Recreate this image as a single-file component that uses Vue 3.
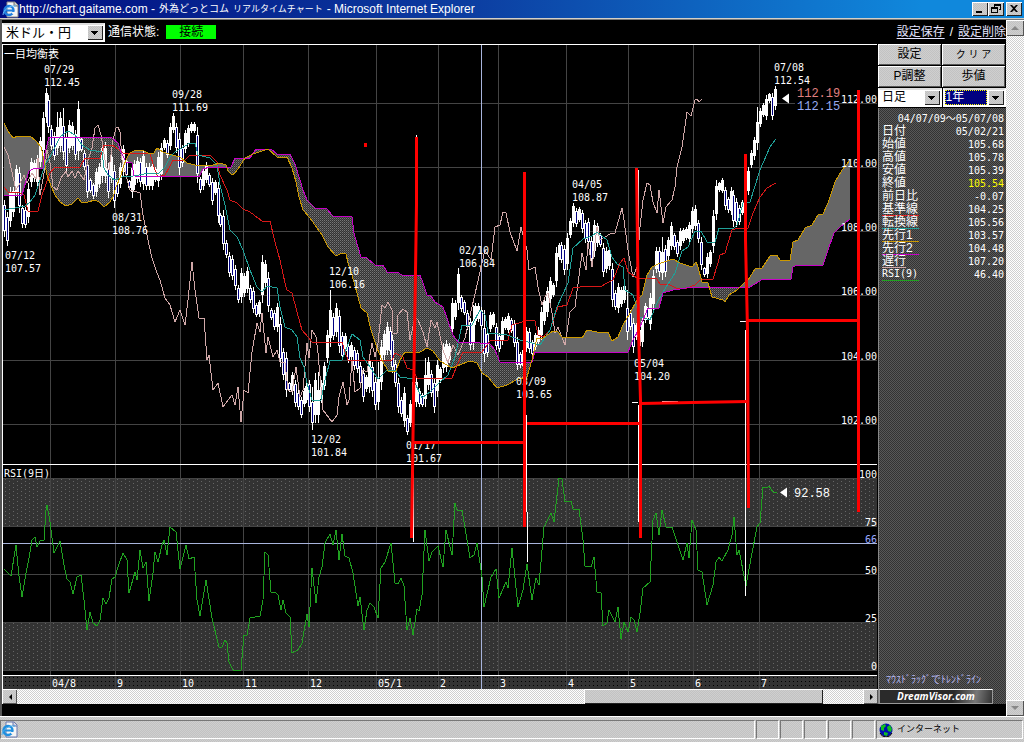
<script setup>
import { ref } from 'vue'

const pair = ref('usdjpy')
const span = ref('day')
const range = ref('1y')

const parse = (s) => s.trim().split(/\s+/).map((p) => p.split(',').map(Number))

const spanA = '4,123 8,131 13,138 18,136 30,136 36,141 41,147 44,160 47,175 51,186 55,195 60,202 66,206 72,204 78,198 82,203 88,202 95,200 99,202 104,207 110,202 113,197 116,187 120,178 124,165 127,158 130,153 136,150 142,150 148,153 154,153 157,148 163,152 172,155 180,157 187,163 195,165 213,165 220,163 226,165 228,171 232,175 235,173 240,166 245,158 253,154 268,149 277,157 287,157 292,168 296,182 299,197 303,210 310,218 322,235 328,247 336,256 342,253 346,254 348,263 352,275 357,293 361,308 367,313 371,330 377,348 382,360 388,371 396,371 400,360 405,352 420,352 427,348 433,351 440,361 452,368 467,362 471,361 477,363 482,373 488,377 497,388 507,385 518,379 527,377 532,360 537,338 543,338 553,331 558,332 562,337 582,338 587,330 597,332 608,332 612,341 618,337 623,325 630,313 637,300 642,295 647,275 652,267 658,264 673,259 680,263 692,267 696,262 698,267 702,282 708,283 712,297 723,300 725,302 729,295 737,290 745,282 748,280 755,269 762,268 770,256 777,255 780,260 790,260 793,242 798,240 805,228 812,225 818,215 823,214 828,203 835,182 842,170 850,160'
const spanB = '4,195 22,195 24,188 29,171 35,168 43,168 45,153 49,137 111,137 118,143 121,152 126,162 132,163 134,176 199,177 203,169 210,167 231,167 235,158 250,158 256,149 271,149 277,154 290,154 295,164 300,180 303,190 307,200 315,208 326,208 333,216 347,216 352,217 354,233 358,247 361,257 367,258 375,265 383,265 387,272 397,272 402,275 420,275 423,283 427,295 431,296 435,302 443,307 447,318 453,335 458,342 480,343 490,344 495,350 500,362 532,362 535,352 628,352 633,340 640,327 648,308 659,308 663,293 673,290 693,287 738,287 750,287 763,279 791,279 793,267 797,265 823,265 828,250 834,233 840,227 850,219'
const tenkan = '4,210 15,208 25,206 30,202 35,195 40,180 45,165 52,153 60,137 68,131 75,135 82,145 90,150 102,152 104,168 108,175 115,180 122,177 133,176 150,173 158,174 165,167 170,157 175,152 190,143 195,143 198,155 210,158 217,165 220,185 225,205 230,230 237,237 243,250 250,270 257,287 262,292 267,286 277,288 280,307 285,327 292,330 297,337 300,358 304,367 307,383 312,400 321,400 325,380 330,361 342,360 347,347 352,334 360,340 363,357 370,367 378,379 387,370 395,370 400,377 413,379 422,398 430,392 440,382 448,375 455,357 462,325 472,325 480,310 485,315 488,333 507,335 520,340 540,345 550,330 557,307 568,283 573,248 583,239 592,236 597,232 607,240 612,257 617,264 623,267 625,290 633,295 640,317 650,320 657,303 663,292 675,273 682,251 688,247 695,231 701,231 707,242 715,242 719,228 734,228 737,225 743,203 750,202 760,170 770,147 776,139'
const kijun = '4,187 8,192 18,192 24,195 28,211 38,211 42,195 50,173 55,167 80,167 85,158 100,158 104,145 112,145 118,149 123,153 150,154 155,170 158,177 165,175 170,166 173,160 185,160 190,155 210,155 217,162 220,175 227,190 230,200 237,203 243,209 250,212 258,218 262,221 270,221 275,242 280,260 285,283 287,290 292,293 297,312 302,330 308,337 312,342 342,342 345,352 348,360 392,360 395,353 403,357 407,368 413,370 417,378 452,378 458,363 463,352 482,352 490,341 508,340 512,325 522,322 525,320 535,321 538,335 543,337 550,330 555,315 558,307 567,305 573,288 580,287 602,286 607,283 613,280 620,263 624,258 628,272 637,278 657,279 660,284 670,285 676,288 687,288 695,285 700,280 713,279 718,263 720,255 725,253 732,230 738,228 748,228 753,213 760,197 767,188 776,183'
const chikou = '4,147 8,155 12,172 16,190 20,183 24,175 27,183 32,173 36,179 38,158 40,195 45,168 47,150 50,163 53,187 57,190 61,178 66,171 68,177 72,171 75,178 78,171 84,180 88,160 92,148 95,128 98,125 101,135 103,147 106,167 109,170 113,140 116,128 118,127 120,132 122,160 126,175 130,190 140,193 143,215 148,240 152,258 157,273 160,280 165,298 170,305 175,322 180,310 185,325 188,300 192,262 195,290 199,318 204,318 207,360 209,355 213,390 218,383 223,407 232,395 235,405 238,387 241,422 244,390 248,393 252,352 257,323 260,332 262,313 266,353 268,337 273,357 277,350 280,362 285,363 288,390 292,392 296,367 300,397 303,390 307,343 309,358 312,330 316,337 318,353 323,410 332,422 337,415 339,397 343,382 347,405 349,400 352,360 355,392 360,388 363,370 367,372 372,343 375,357 378,343 382,305 385,308 388,302 392,310 393,333 397,333 398,315 403,309 407,312 410,340 415,317 418,320 423,332 427,347 431,320 435,328 437,322 443,350 448,363 453,345 458,355 465,338 472,307 480,272 485,250 491,260 495,227 500,225 503,212 506,213 510,232 517,251 521,227 527,250 529,270 535,267 538,287 542,305 545,297 548,293 552,313 555,333 558,327 565,345 570,312 575,307 582,253 586,270 588,243 592,267 597,227 600,240 610,234 615,233 622,208 624,220 628,250 633,277 637,267 640,227 643,200 647,183 650,185 653,202 657,213 659,190 663,223 666,207 672,200 675,187 677,167 682,147 687,112 691,116 695,100 697,99 699,102 702,99'
const rsi = '4,569 11,576 16,545 19,576 22,597 26,573 29,558 32,540 35,537 37,547 40,541 44,540 46,510 47,505 50,522 54,553 60,541 64,565 67,579 70,582 73,594 77,577 81,575 84,600 87,630 90,612 93,623 97,626 100,620 103,598 106,604 109,598 112,579 115,577 118,567 123,553 127,560 129,593 135,572 137,580 140,550 143,568 146,562 149,601 153,573 155,552 158,562 162,545 164,540 167,555 170,527 176,532 180,569 186,545 189,559 194,557 197,600 200,616 206,580 212,618 219,647 222,647 225,640 227,643 229,662 233,670 241,670 244,635 247,635 250,618 260,616 263,600 265,552 268,555 271,592 275,592 278,595 281,610 283,600 286,613 290,617 292,653 298,650 302,643 307,614 309,627 312,568 316,603 319,577 322,567 325,543 330,534 333,545 336,530 339,560 342,534 345,556 349,558 353,573 358,606 360,597 364,630 367,610 370,603 374,607 378,618 381,568 385,562 391,543 395,583 398,584 401,578 404,586 407,630 410,618 413,635 417,609 419,611 422,595 425,530 429,561 432,552 438,546 443,567 446,530 452,555 455,503 457,510 462,510 470,558 474,555 477,543 482,577 484,607 491,577 496,569 499,598 506,582 508,588 512,548 518,607 523,590 527,564 532,600 536,578 539,585 544,527 551,513 554,522 559,478 562,479 565,502 571,501 573,509 579,509 583,540 585,566 591,567 594,557 597,592 601,593 603,626 607,623 609,610 615,622 618,607 621,639 624,622 628,632 631,617 634,620 637,632 640,613 643,588 650,582 653,520 656,513 659,535 662,510 666,527 672,527 677,542 683,560 687,543 689,558 692,520 696,530 698,570 702,572 707,605 713,585 716,562 719,557 722,561 728,550 732,535 734,517 737,555 739,550 746,586 752,553 757,527 760,523 763,487 767,488 769,486 773,492 777,493'

const bars = parse('200,237 212,246 187,227 187,217 165,197 167,213 205,228 207,228 183,223 158,187 160,182 155,187 137,167 112,157 88,123 95,133 125,150 132,160 112,155 112,152 108,160 132,173 120,153 122,150 130,160 101,160 137,152 150,170 160,198 178,193 183,199 168,197 163,188 142,183 142,183 163,198 153,183 165,208 180,197 163,188 145,177 158,178 180,190 163,198 160,190 157,183 158,187 150,190 163,190 163,190 162,190 167,182 152,187 143,180 138,150 140,158 123,150 113,133 123,153 133,175 145,167 130,153 125,147 122,133 122,133 127,183 177,193 168,190 162,183 173,187 178,205 180,195 182,223 213,227 210,250 240,258 252,277 255,280 265,290 285,303 268,303 273,297 267,293 285,303 287,313 303,317 300,317 255,303 260,287 272,312 308,320 310,330 303,332 317,367 348,380 352,397 382,392 372,395 380,407 390,410 397,418 388,407 383,403 380,412 387,430 373,423 372,423 380,403 362,390 330,363 290,347 313,340 303,337 310,353 332,360 333,355 343,363 342,360 347,370 350,373 362,387 368,402 375,392 355,393 362,397 377,410 362,410 340,390 330,360 322,355 327,355 335,373 360,387 378,413 397,417 387,427 415,435 400,427 378,410 378,407 388,407 393,407 358,407 357,390 370,397 378,413 360,397 367,383 343,373 340,372 343,363 298,335 300,320 268,310 295,312 300,315 310,330 318,350 305,350 303,325 303,322 307,330 310,362 330,357 312,332 312,327 323,350 333,352 317,345 317,330 313,333 318,333 320,347 337,370 352,368 347,370 327,352 328,353 340,357 333,350 327,345 307,340 297,325 287,317 277,303 283,297 247,287 243,260 242,263 245,275 233,270 218,238 203,227 208,227 207,222 210,233 220,243 218,247 237,263 220,257 223,247 233,247 243,277 247,273 247,270 263,307 290,310 283,313 287,307 283,303 290,340 310,330 318,353 323,340 327,350 317,347 303,323 307,320 293,330 270,310 247,273 247,277 237,280 245,277 237,260 222,250 233,250 240,257 228,250 228,243 227,240 222,242 207,233 205,230 220,243 237,270 267,277 253,278 250,267 210,253 180,220 182,192 178,193 187,210 197,213 187,215 190,227 198,227 205,225 200,215 190,197 167,195 150,168 137,160 107,150 108,127 103,117 95,120 93,103 93,120 86,110')

const firstX = 4
const lastX = 775
const candles = bars.map(([high, low], i) => {
  const mid = (high + low) / 2
  const prev = i ? (bars[i - 1][0] + bars[i - 1][1]) / 2 : mid - 1
  const length = low - high
  const upper = length > 42 && i % 2 === 0 ? 0.35 : 0.14
  return {
    x: Math.round(firstX + ((lastX - firstX) * i) / (bars.length - 1)),
    high,
    low,
    top: Math.round(high + length * upper),
    bottom: Math.round(low - length * 0.16),
    down: mid > prev,
  }
})

function valueAt(points, x) {
  for (let i = 1; i < points.length; i++) {
    if (points[i][0] >= x) {
      const [x0, y0] = points[i - 1]
      const [x1, y1] = points[i]
      return y0 + ((y1 - y0) * (x - x0)) / (x1 - x0)
    }
  }
  return points[points.length - 1][1]
}

// The cloud is filled column by column: plain when span A leads, dotted when span B leads.
const cloud = { bull: '', bear: '' }
const a = parse(spanA)
const b = parse(spanB)
for (let x = 4; x < 850; x++) {
  const ya = Math.round(valueAt(a, x))
  const yb = Math.round(valueAt(b, x))
  if (ya < yb) cloud.bull += `M${x} ${ya}h1V${yb}h-1z`
  if (ya > yb) cloud.bear += `M${x} ${yb}h1V${ya}h-1z`
}

const months = [
  [50, '04/8'], [115, '9'], [180, '10'], [243, '11'], [308, '12'], [376, '05/1'],
  [438, '2'], [498, '3'], [566, '4'], [628, '5'], [693, '6'], [759, '7'],
]
const prices = [[103, '112.00'], [167, '110.00'], [231, '108.00'], [295, '106.00'], [360, '104.00'], [424, '102.00']]
const levels = [[478, '100'], [526, '75'], [574, '50'], [622, '25'], [670, '0']]
const marks = [
  [44, 73, '07/29', '112.45'], [172, 98, '09/28', '111.69'], [112, 221, '08/31', '108.76'],
  [5, 259, '07/12', '107.57'], [329, 275, '12/10', '106.16'], [459, 254, '02/10', '106.84'],
  [311, 443, '12/02', '101.84'], [406, 449, '01/17', '101.67'], [516, 385, '03/09', '103.65'],
  [572, 188, '04/05', '108.87'], [634, 367, '05/04', '104.20'], [774, 71, '07/08', '112.54'],
]
const rows = [
  ['日付', '05/02/21'], ['始値', '105.68'], ['高値', '105.78'], ['安値', '105.39'],
  ['終値', '105.54', '', 'close'], ['前日比', '-0.07'], ['基準線', '104.25', 'key u-red'],
  ['転換線', '105.56', 'key u-teal'], ['先行1', '103.57', 'key u-gold'], ['先行2', '104.48', 'key u-magenta'],
  ['遅行', '107.20', 'key u-pink'], ['RSI(9)', '46.40', 'key u-green'],
]
</script>

<template>
  <div class="window">
    <header class="titlebar">
      <svg class="ie" viewBox="0 0 17 17" aria-hidden="true">
        <path d="M5 1h8l3 3v12H5z" fill="#f4f4f4" stroke="#888" />
        <path d="M12 1v4h4" fill="#bbb" stroke="#777" />
        <ellipse cx="7" cy="9.500" rx="4.500" ry="4.500" fill="none" stroke="#1f7fe0" stroke-width="2.400" />
        <path d="M3 9.500h8" stroke="#1f7fe0" stroke-width="2" />
        <path d="M9.500 11h4v2h-3z" fill="#f4f4f4" />
        <path d="M1 14C1 9 8 4 14 5" fill="none" stroke="#6cc4ff" />
      </svg>
      <h1>
        <span>http://chart.gaitame.com -</span>
        <span class="kana">外為どっとコム</span>
        <span class="kana second">リアルタイムチャート</span>
        <span>- Microsoft Internet Explorer</span>
      </h1>
      <div class="winbtns">
        <button aria-label="最小化"><svg viewBox="0 0 14 12"><path d="M3 8h6v2H3z" /></svg></button>
        <button aria-label="元に戻す"><svg viewBox="0 0 14 12"><path d="M5 1h7v6H10V6h1V3H6v1H5zM2 4h7v6H2zM3 6v3h5V6z" fill-rule="evenodd" /></svg></button>
        <button class="close-btn" aria-label="閉じる"><svg viewBox="0 0 14 12"><path d="M3 2h2l2 2 2-2h2L8 5.500 11 9H9L7 7 5 9H3l3-3.500z" /></svg></button>
      </div>
    </header>

    <div class="viewport">
      <main>
        <div class="toolbar">
          <label class="select pair">
            <select v-model="pair" aria-label="通貨ペア"><option value="usdjpy">米ドル・円</option></select>
          </label>
          <span class="state">通信状態:</span>
          <span class="connected">接続</span>
          <nav>
            <a href="#save">設定保存</a><span>/</span><a href="#delete">設定削除</a>
          </nav>
        </div>

        <div class="content">
          <section class="chart-col">
            <svg class="chart" viewBox="2 44 876 645" role="img" aria-label="米ドル・円 一目均衡表">
              <defs>
                <pattern id="dots" width="2" height="2" patternUnits="userSpaceOnUse">
                  <rect width="2" height="2" fill="#333" /><rect width="1" height="1" fill="#777" /><rect x="1" y="1" width="1" height="1" fill="#555" />
                </pattern>
                <pattern id="band" width="8" height="8" patternUnits="userSpaceOnUse">
                  <rect width="8" height="8" fill="#333" />
                  <path d="M1 1h1v1H1zM5 3h1v1H5zM1 5h1v1H1zM5 7h1v1H5z" fill="#666" />
                </pattern>
                <pattern id="axis" width="4" height="4" patternUnits="userSpaceOnUse">
                  <rect width="4" height="4" fill="#333" /><rect x="1" y="1" width="1" height="1" fill="#000" />
                </pattern>
              </defs>
              <g shape-rendering="crispEdges">
                <rect x="2" y="44" width="876" height="645" fill="#000" />
                <rect x="3" y="478" width="874" height="49" fill="url(#band)" />
                <rect x="3" y="622" width="874" height="49" fill="url(#band)" />
                <rect x="3" y="676" width="874" height="13" fill="url(#axis)" />
                <g class="grid">
                  <rect v-for="m in months" :key="m[0]" :x="m[0]" y="45" width="1" height="644" />
                  <rect v-for="p in prices" :key="p[0]" x="3" :y="p[0]" width="874" height="1" />
                  <rect v-for="l in levels" :key="l[0]" x="3" :y="l[0]" width="874" height="1" />
                </g>
                <path :d="cloud.bull" fill="#666" />
                <path :d="cloud.bear" fill="url(#dots)" />
                <rect x="481" y="45" width="1" height="644" class="cursor" />
                <rect x="3" y="543" width="874" height="1" class="cursor" />
                <g v-for="(c, i) in candles" :key="i">
                  <rect :x="c.x" :y="c.high" width="1" :height="c.low - c.high" fill="#fff" />
                  <rect :x="c.x - 1" :y="c.top" width="3" :height="c.bottom - c.top" fill="#fff" />
                  <rect v-if="c.down" :x="c.x" :y="c.top + 1" width="1" :height="Math.max(1, c.bottom - c.top - 2)" fill="#000080" />
                </g>
              </g>
              <g class="lines" shape-rendering="crispEdges">
                <polyline :points="chikou" stroke="#d0a8a8" />
                <polyline :points="kijun" stroke="#d81818" />
                <polyline :points="tenkan" stroke="#20a098" />
                <polyline :points="spanB" stroke="#c800c8" />
                <polyline :points="spanA" stroke="#cc9900" />
                <polyline :points="rsi" stroke="#20a020" />
              </g>
              <g shape-rendering="crispEdges" fill="#fff">
                <rect x="3" y="44" width="874" height="1" />
                <rect x="3" y="464" width="874" height="1" />
                <rect x="3" y="675" width="874" height="1" />
                <rect x="2" y="44" width="1" height="645" />
              </g>
              <g class="jp">
                <text x="4" y="58">一目均衡表</text>
              </g>
              <g class="num">
                <text x="4" y="477">RSI(9日)</text>
                <g v-for="m in marks" :key="m[2]">
                  <text :x="m[0]" :y="m[1]">{{ m[2] }}</text>
                  <text :x="m[0]" :y="m[1] + 13">{{ m[3] }}</text>
                </g>
                <text v-for="m in months" :key="m[1]" :x="m[0] + 2" y="687">{{ m[1] }}</text>
                <g text-anchor="end">
                  <text v-for="p in prices" :key="p[1]" x="877" :y="p[0]">{{ p[1] }}</text>
                  <text v-for="l in levels" :key="l[1]" x="877" :y="l[0]">{{ l[1] }}</text>
                  <text x="877" y="543" fill="#99aaff">66</text>
                </g>
              </g>
              <path d="M782 98.500l7-5v10zM780 492.500l7-5v10z" fill="#fff" />
              <rect x="795" y="91" width="44" height="20" fill="#000" />
              <g class="quote">
                <text x="797" y="97" fill="#e08080">112.19</text>
                <text x="797" y="110" fill="#99aaee">112.15</text>
                <text x="794" y="497" fill="#fff">92.58</text>
              </g>
              <g class="white" shape-rendering="crispEdges">
                <path d="M413.500 415V542M526.500 415V512M527.500 512V562M638.500 170V242M638.500 405V522M745.500 330V596M632 402.500h6M662 401.500h16M740 321.500h6M416.500 135v3" />
              </g>
              <g class="red">
                <path d="M416.500 137V205L415.500 272 413.500 400 412.500 472 411.500 538" />
                <path d="M524.500 172V527" />
                <path d="M636.500 168L637.500 242 638.500 330 640.500 400V538" />
                <path d="M745.500 154V240L747.500 330 748.500 508" />
                <path d="M858.500 90V512" />
                <path d="M413 442.500H525M527 423.500H639M641 403.500L692 402.500 748 401.500M746 320.500H858" />
                <path d="M365.500 143v4" />
              </g>
            </svg>
            <div class="hscroll">
              <button aria-label="左へ"><svg viewBox="0 0 8 8"><path d="M6 1v6L3 4z" /></svg></button>
              <div class="before"></div><div class="thumb"></div><div class="after"></div>
              <button aria-label="右へ"><svg viewBox="0 0 8 8"><path d="M3 1v6l3-3z" /></svg></button>
            </div>
          </section>

          <aside>
            <div class="buttons">
              <button>設定</button><button class="wide">ク リ ア</button>
              <button>P調整</button><button>歩値</button>
            </div>
            <div class="selects">
              <label class="select"><select v-model="span" aria-label="足種"><option value="day">日足</option></select></label>
              <label class="select focus"><select v-model="range" aria-label="期間"><option value="1y">1年</option></select></label>
            </div>
            <div class="info">
              <p class="period">04/07/09～05/07/08</p>
              <table>
                <tbody>
                  <tr v-for="r in rows" :key="r[0]">
                    <th scope="row"><span :class="r[2]">{{ r[0] }}</span></th>
                    <td :class="r[3]">{{ r[1] }}</td>
                  </tr>
                </tbody>
              </table>
              <p class="hint">ﾏｳｽﾄﾞﾗｯｸﾞでﾄﾚﾝﾄﾞﾗｲﾝ</p>
              <div class="brand">DreamVisor.com</div>
            </div>
          </aside>
        </div>
      </main>

      <div class="vscroll">
        <button aria-label="上へ" disabled><svg viewBox="0 0 8 8"><path d="M0 6l4-4 4 4z" /></svg></button>
        <button aria-label="下へ" disabled><svg viewBox="0 0 8 8"><path d="M0 2l4 4 4-4z" /></svg></button>
      </div>
    </div>

    <footer class="status">
      <div class="page">
        <svg class="ie" viewBox="0 0 17 17" aria-hidden="true">
          <path d="M5 1h8l3 3v12H5z" fill="#f4f4f4" stroke="#6878b0" />
          <path d="M12 1v4h4" fill="#ccd" stroke="#6878b0" />
          <ellipse cx="7" cy="9.500" rx="4.500" ry="4.500" fill="none" stroke="#1f8fe0" stroke-width="2.400" />
          <path d="M3 9.500h8" stroke="#1f8fe0" stroke-width="2" />
          <path d="M9.500 11h4v2h-3z" fill="#f4f4f4" />
          <path d="M1 14C1 9 8 4 14 5" fill="none" stroke="#48b0f0" />
        </svg>
      </div>
      <div v-for="n in 5" :key="n" class="cell"></div>
      <div class="zone">
        <svg viewBox="0 0 14 14" aria-hidden="true">
          <circle cx="7" cy="7" r="6.500" fill="#0010b0" />
          <path d="M2 3l4-2 1 2-2 2v3L2 7zM8 4l3-2 2 4-1 3-3-1zM5 9l4 1-1 3-3-1z" fill="#10c020" />
          <path d="M1 10a6.500 6.500 0 0 0 12 0" fill="none" stroke="#000" />
        </svg>
        インターネット
      </div>
    </footer>
  </div>
</template>

<style>
body {
  margin: 0;
  background: #000;
}
</style>

<style scoped>
.window {
  --face: repeating-conic-gradient(#cfcfcf 0 25%, #c2c2c2 0 50%) 0 0 / 2px 2px;
  --track: repeating-conic-gradient(#fff 0 25%, #d0d0d0 0 50%) 0 0 / 2px 2px;
  --jp: "Liberation Sans", "Noto Sans CJK JP", sans-serif;
  --mono: "DejaVu Sans Mono", "Noto Sans CJK JP", monospace;
  display: flex;
  flex-direction: column;
  min-height: 100vh;
  font: 12px/13px var(--jp);
  color: #fff;
  background: #000;
}
button,
select {
  font: inherit;
  color: #000;
  margin: 0;
  padding: 0;
  border: 0;
  border-radius: 0;
  box-sizing: border-box;
}
p {
  margin: 0;
}
button {
  background: var(--face);
  box-shadow: inset 1px 1px #fff, inset -1px -1px #555;
}
.titlebar {
  display: flex;
  align-items: center;
  height: 18px;
  padding: 0 2px;
  background: linear-gradient(90deg, #000c80, #0c3ca0 45%, #1088dc 90%);
  border-bottom: 1px solid #d4d0c8;
}
.ie {
  width: 17px;
  height: 17px;
  flex: none;
}
h1 {
  display: flex;
  align-items: center;
  gap: 4px;
  flex: 1;
  margin: 0;
  font-size: 12px;
  line-height: 16px;
  font-weight: 400;
  white-space: nowrap;
}
.kana {
  font-size: 10px;
}
.second {
  font-size: 9px;
}
.winbtns {
  display: flex;
}
.winbtns button {
  width: 16px;
  height: 14px;
  display: grid;
  place-items: center;
  box-shadow: inset 1px 1px #fff, inset -1px -1px #222;
}
.winbtns svg {
  width: 14px;
  height: 12px;
}
.winbtns .close-btn {
  margin-left: 2px;
}
.viewport {
  flex: 1;
  display: flex;
  border-left: 2px solid #555;
  border-top: 1px solid #777;
}
main {
  flex: 1;
  min-width: 0;
}
.toolbar {
  display: flex;
  align-items: center;
  height: 24px;
  box-sizing: border-box;
}
.select {
  display: grid;
  grid-template-columns: minmax(0, 1fr) 16px;
  height: 19px;
  box-sizing: border-box;
  border: 2px solid #fff;
  border-top-color: #ddd;
  background: #fff;
}
.select select {
  grid-column: 1 / -1;
  grid-row: 1;
  appearance: none;
  background: transparent;
  height: 15px;
  line-height: 15px;
  padding-left: 2px;
  outline: none;
}
.select::after {
  content: "";
  grid-column: 2;
  grid-row: 1;
  pointer-events: none;
  background: linear-gradient(#000, #000) 7px 9px / 1px 1px no-repeat, linear-gradient(#000, #000) 6px 8px / 3px 1px no-repeat,
    linear-gradient(#000, #000) 5px 7px / 5px 1px no-repeat, linear-gradient(#000, #000) 4px 6px / 7px 1px no-repeat, var(--face);
  box-shadow: inset 1px 1px #fff, inset -1px -1px #222;
}
.pair {
  width: 103px;
  font-size: 13px;
}
.state {
  margin-left: 3px;
}
.connected {
  margin-left: 7px;
  width: 50px;
  height: 14px;
  line-height: 14px;
  text-align: center;
  color: #000;
  background: #0f0;
}
nav {
  margin-left: auto;
  display: flex;
  gap: 5px;
}
a {
  color: #e4e4ff;
  text-underline-offset: 2px;
}
.content {
  display: flex;
}
.chart-col {
  flex: 1;
  min-width: 0;
}
.chart {
  display: block;
  width: 100%;
  height: auto;
}
.grid rect {
  fill: #444;
}
.cursor {
  fill: #a8b4dc;
}
.lines polyline {
  fill: none;
  stroke-width: 1;
}
.num {
  font: 10px var(--mono);
  fill: #fff;
}
.jp {
  font: 11px var(--jp);
  fill: #fff;
}
.quote {
  font: 12px "Liberation Mono", monospace;
}
.white path {
  stroke: #fff;
  fill: none;
}
.red path {
  stroke: #f00;
  stroke-width: 3;
  fill: none;
}
.hscroll {
  display: flex;
  height: 15px;
}
.hscroll button {
  width: 15px;
  display: grid;
  place-items: center;
}
.hscroll svg,
.vscroll svg {
  width: 8px;
  height: 8px;
}
.before,
.after {
  background: var(--track);
}
.before {
  flex: 568;
}
.thumb {
  flex: 239;
  background: var(--face);
  box-shadow: inset 1px 1px #fff, inset -1px -1px #222;
}
.after {
  flex: 40;
}
aside {
  width: 128px;
  flex: none;
  display: flex;
  flex-direction: column;
}
.buttons {
  display: grid;
  grid-template-columns: 1fr 1fr;
  grid-auto-rows: 22px;
}
.buttons button {
  border-right: 1px solid #000;
  border-bottom: 1px solid #000;
}
.buttons .wide {
  font-size: 10px;
}
.selects {
  display: grid;
  grid-template-columns: 1fr 1fr;
  gap: 1px;
  padding-bottom: 1px;
}
.focus select {
  color: #fff;
  background: #000080;
  width: calc(100% - 17px);
  padding-left: 1px;
  outline: 1px dotted #ff0;
  outline-offset: -1px;
}
.info {
  flex: 1;
  display: flex;
  flex-direction: column;
  padding: 4px 2px 0 3px;
  border-left: 1px solid #888;
  background: repeating-conic-gradient(#333 0 25%, #585858 0 50%) 0 0 / 2px 2px;
}
.period {
  text-align: right;
  font: 10px/13px var(--mono);
}
table {
  width: 100%;
  border-collapse: collapse;
}
th,
td {
  padding: 0;
  height: 13px;
  line-height: 13px;
  font-weight: 400;
}
th {
  text-align: left;
}
th span {
  display: block;
  width: 37px;
  height: 13px;
  line-height: 12px;
  box-sizing: border-box;
  white-space: nowrap;
}
tr:last-child th {
  font: 10px/13px var(--mono);
}
td {
  text-align: right;
  font: 10px/13px var(--mono);
}
.close {
  color: #ff0;
}
th .key {
  border-bottom: 1px solid;
}
th .u-red { border-color: #e02020; }
th .u-teal { border-color: #20a098; }
th .u-gold { border-color: #cc9900; }
th .u-magenta { border-color: #c800c8; }
th .u-pink { border-color: #d0a8a8; width: 24px; }
th .u-green { border-color: #20a020; }
.hint {
  margin-top: auto;
  padding: 0 4px 3px;
  font: 10px/14px "Noto Sans CJK JP", sans-serif;
  color: #b8b8f0;
}
.brand {
  width: 114px;
  height: 15px;
  margin-left: -3px;
  box-sizing: border-box;
  border: 1px solid #999;
  border-top-color: #fff;
  background: linear-gradient(100deg, #2a2a2a 65%, #777 85%, #333);
  text-align: center;
  font: italic bold 10px/12px "Open Sans", sans-serif;
}
.vscroll {
  width: 18px;
  flex: none;
  display: flex;
  flex-direction: column;
  justify-content: space-between;
  background: var(--track);
}
.vscroll button {
  height: 16px;
  display: grid;
  place-items: center;
}
.vscroll path {
  fill: #888;
}
.status {
  display: flex;
  height: 26px;
  box-sizing: border-box;
  padding: 3px 0;
  background: var(--face);
  border-top: 1px solid #fff;
  color: #000;
}
.status > div {
  box-sizing: border-box;
  border-top: 1px solid #777;
  border-left: 1px solid #777;
  border-right: 1px solid #fff;
  border-bottom: 1px solid #fff;
  margin-right: 1px;
}
.page {
  flex: 1;
}
.cell {
  width: 23px;
}
.zone {
  width: 147px;
  display: flex;
  align-items: center;
  gap: 4px;
  padding-left: 2px;
  font-size: 9px;
}
.zone svg {
  width: 14px;
  height: 14px;
}
</style>
